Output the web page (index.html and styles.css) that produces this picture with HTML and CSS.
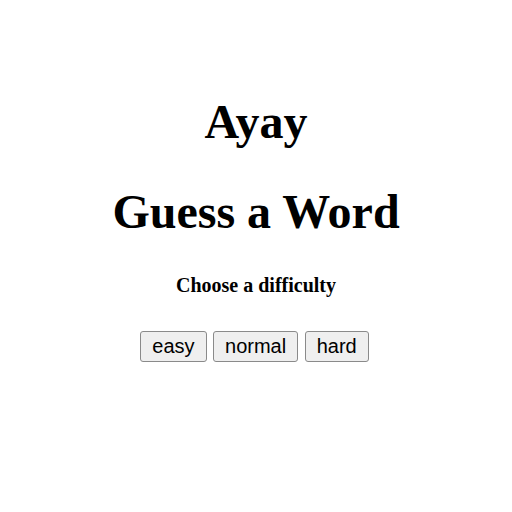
FILE: index.html
```html
<!DOCTYPE html>
<html lang="en">
<head>
<meta charset="utf-8">
<title>Guess a Word</title>
<link rel="stylesheet" href="styles.css">
</head>
<body>
<main class="game">
  <h1 class="title">Ayay</h1>
  <h1 class="title">Guess a Word</h1>
  <h3 class="prompt">Choose a difficulty</h3>
  <div class="choices">
    <button class="choice" type="button">easy</button>
    <button class="choice" type="button">normal</button>
    <button class="choice" type="button">hard</button>
  </div>
</main>
</body>
</html>
```
FILE: styles.css
```css
html, body {
  margin: 0;
  padding: 0;
  background: #ffffff;
}

body {
  font-family: "Liberation Serif", "Times New Roman", serif;
  color: #000000;
}

.game {
  padding-top: 94px;
  text-align: center;
}

.title {
  font-size: 48px;
  font-weight: bold;
  margin: 0 0 35px;
}

.prompt {
  font-size: 20px;
  font-weight: bold;
  margin: 0 0 34px;
}

.choices {
  display: flex;
  justify-content: center;
  gap: 6.5px;
  padding-right: 3px;
}

.choice {
  font-family: "Liberation Sans", Arial, sans-serif;
  font-size: 20px;
  color: #000000;
  background: #efefef;
  border: 1px solid #8a8a8a;
  border-radius: 3px;
  padding: 3px 11px;
  margin: 0;
  line-height: normal;
}
```
